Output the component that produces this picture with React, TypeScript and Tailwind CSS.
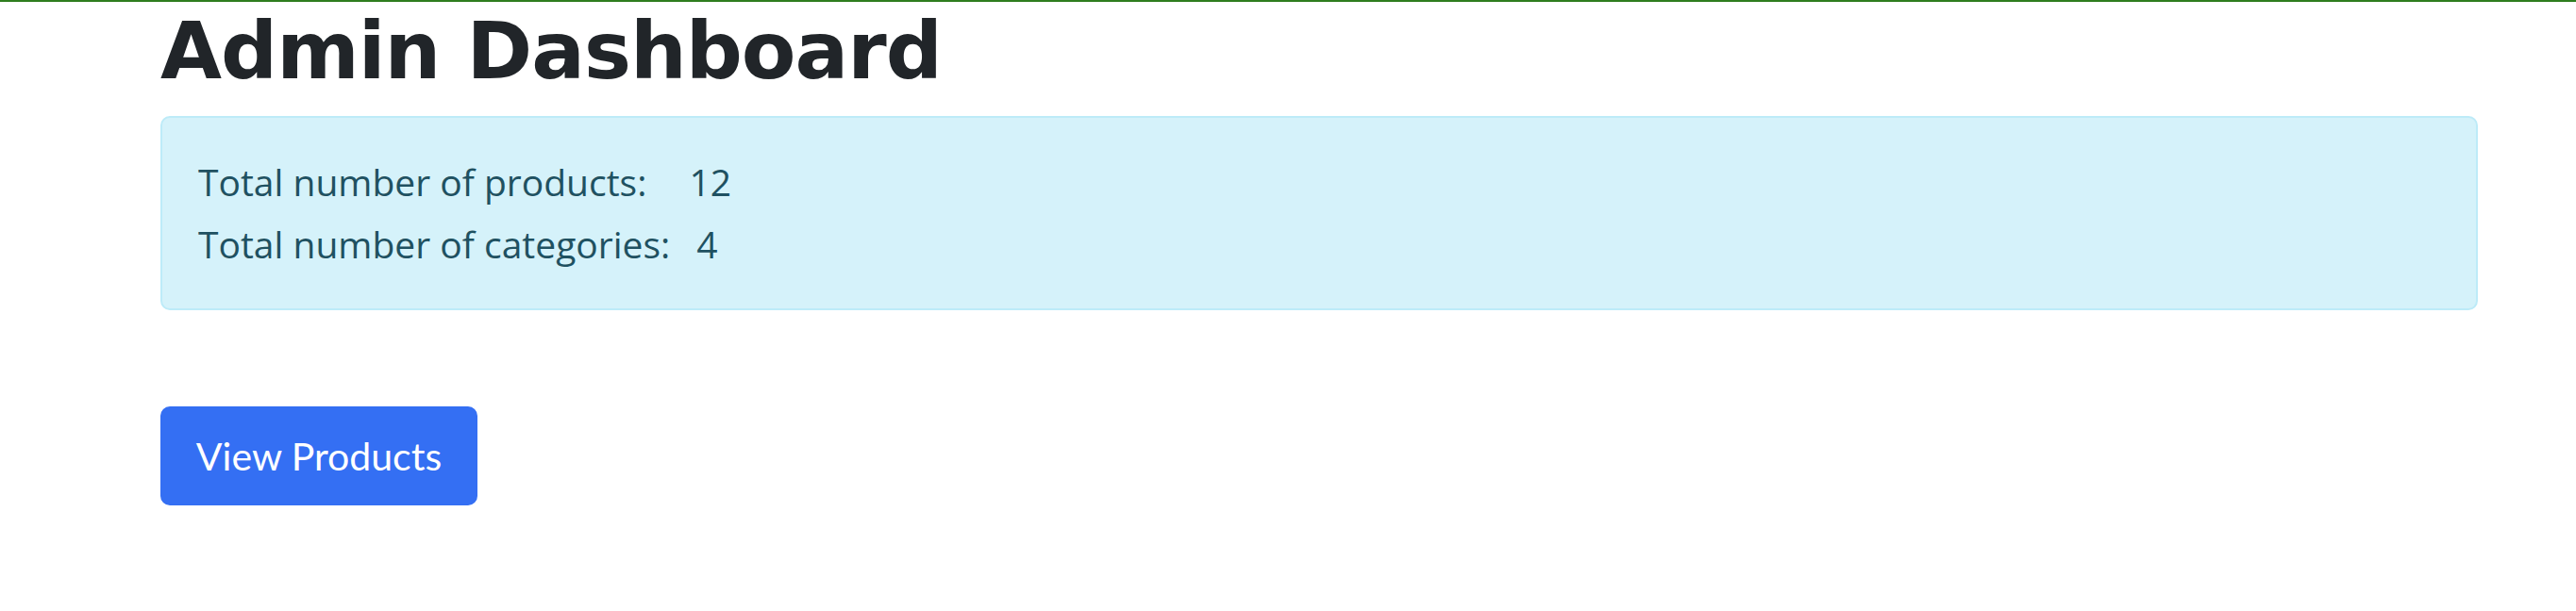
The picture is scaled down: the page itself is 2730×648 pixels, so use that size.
import React from "react";

export default function App() {
  return (
    <div className="w-[2730px] h-[648px] bg-white">
      <div className="h-[2px] bg-[#2e7d1e]" />
      <div className="ml-[170px] w-[2456px] flex flex-col items-start">
        <h1
          className="mt-[2px] text-[84px] leading-[1.2] font-bold text-[#212529] tracking-[-1px]"
          style={{ fontFamily: '"DejaVu Sans", sans-serif' }}
        >
          Admin Dashboard
        </h1>
        <div
          className="mt-[18px] w-full rounded-[10px] border-2 border-[#bdebf8] bg-[#d5f2fa] px-[38px] py-[35px] text-[39px] leading-[66px] text-[#1f5161] flex flex-col"
          style={{ fontFamily: '"Open Sans", sans-serif' }}
        >
          <div className="flex">
            <span>Total number of products:</span>
            <span className="ml-[45px]">12</span>
          </div>
          <div className="flex">
            <span>Total number of categories:</span>
            <span className="ml-[28px]">4</span>
          </div>
        </div>
        <button
          className="mt-[102px] w-[336px] h-[105px] rounded-[10px] bg-[#346ff3] text-white text-[41px] flex items-center justify-center"
          style={{ fontFamily: 'Lato, sans-serif' }}
        >
          View Products
        </button>
      </div>
    </div>
  );
}
